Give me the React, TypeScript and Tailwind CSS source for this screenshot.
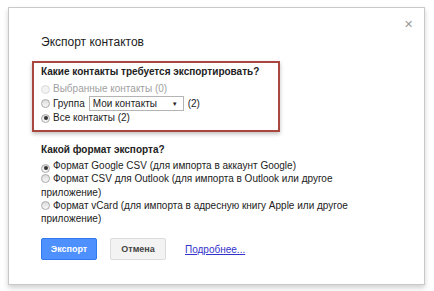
import { FC } from 'react';

const Radio: FC<{ checked?: boolean; disabled?: boolean }> = ({ checked, disabled }) => (
    <span
        className={`inline-flex h-[9px] w-[9px] shrink-0 items-center justify-center rounded-full border ${
            disabled ? 'border-[#dadada] bg-[#f3f3f3]' : 'border-[#a9a9a9] bg-gradient-to-b from-[#dcdcdc] to-[#f8f8f8]'
        }`}
    >
        {checked && <span className="h-[4px] w-[4px] rounded-full bg-[#333]" />}
    </span>
);

const Option: FC<{ checked?: boolean; disabled?: boolean; className?: string; children: React.ReactNode }> = (props) => (
    <div className={`flex items-center gap-[3px] ${props.className ?? 'h-[14px]'} ${props.disabled ? 'text-[#a0a0a0]' : 'text-[#222]'}`}>
        <Radio checked={props.checked} disabled={props.disabled} />
        {props.children}
    </div>
);

const WrapOption: FC<{ checked?: boolean; text: string }> = (props) => (
    <div className="text-[#222]">
        <span className="relative top-[1px] mr-[3px] inline-flex">
            <Radio checked={props.checked} />
        </span>
        {props.text}
    </div>
);

export default function App() {
    return (
        <div
            className="h-[291px] w-[434px] bg-white pl-[8px] pt-[7px]"
            style={{ fontFamily: '"Liberation Sans", Arial, sans-serif' }}
        >
            <div className="relative h-[278px] w-[417px] border border-[#c9c9c9] bg-white pl-[32px] shadow-[0_3px_5px_rgba(0,0,0,0.18)]">
                <span className="absolute right-[11px] top-[11px] text-[11px] leading-none text-[#999]">✕</span>
                <h1 className="pt-[26px] text-[12px] leading-[16px] text-[#222]">Экспорт контактов</h1>
                <div className="-ml-[9px] mt-[11px] h-[71px] w-[248px] border-2 border-[#a9463d] pl-[7px] pt-[2px] text-[10px] leading-[14px] shadow-[0_2px_4px_rgba(0,0,0,0.25)]">
                    <div className="font-bold text-[#222]">Какие контакты требуется экспортировать?</div>
                    <div className="mt-[3px] flex flex-col">
                        <Option disabled>Выбранные контакты (0)</Option>
                        <Option className="h-[15px]">
                            <span>Группа</span>
                            <span className="mx-[1px] flex h-[15px] w-[95px] items-center justify-between border border-[#b4b4b4] bg-white pl-[3px] pr-[5px]">
                                <span>Мои контакты</span>
                                <span className="text-[6px]">▼</span>
                            </span>
                            <span>(2)</span>
                        </Option>
                        <Option checked>Все контакты (2)</Option>
                    </div>
                </div>
                <div className="mt-[11px] text-[10px] leading-[14px]">
                    <div className="font-bold text-[#222]">Какой формат экспорта?</div>
                    <div className="mt-[2px] w-[330px] leading-[13.25px]">
                        <WrapOption checked text="Формат Google CSV (для импорта в аккаунт Google)" />
                        <WrapOption text="Формат CSV для Outlook (для импорта в Outlook или другое приложение)" />
                        <WrapOption text="Формат vCard (для импорта в адресную книгу Apple или другое приложение)" />
                    </div>
                </div>
                <div className="mt-[13px] flex items-center">
                    <button className="h-[22px] w-[56px] rounded-[2px] border border-[#3079ed] bg-[#4d90fe] text-[9px] font-bold text-white">
                        Экспорт
                    </button>
                    <button className="ml-[13px] h-[22px] w-[56px] rounded-[2px] border border-[#dcdcdc] bg-[#f3f3f3] text-[9px] font-bold text-[#444]">
                        Отмена
                    </button>
                    <a className="ml-[19px] text-[10px] text-[#3333cc] underline">Подробнее...</a>
                </div>
            </div>
        </div>
    );
}
